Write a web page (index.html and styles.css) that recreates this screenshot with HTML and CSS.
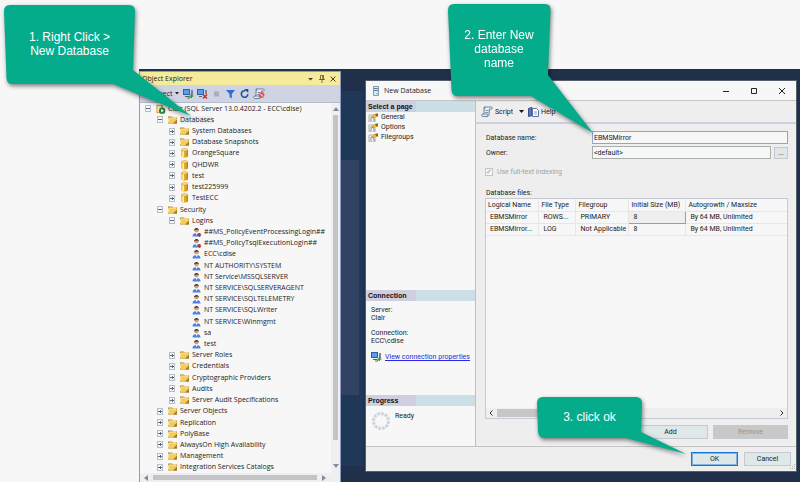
FILE: index.html
```html
<!DOCTYPE html>
<html lang="en">
<head>
<meta charset="utf-8">
<title>New Database</title>
<link rel="stylesheet" href="styles.css">
</head>
<body>
<svg class="sprite" aria-hidden="true">
  <symbol id="folder" viewBox="0 0 10 9"><path d="M0 1h4l1 1h4v6H0z" fill="#b98a2c"/><path d="M0 3l1-1h7v5H0z" fill="#fbe9a0"/><path d="M1 3h8v4.500H1z" fill="#f3cc5c"/><path d="M5 8L9 4v4z" fill="#a87a1e"/></symbol>
  <symbol id="cyl" viewBox="0 0 10 11"><path d="M1 2v7c0 2 7 2 7 0V2z" fill="#e2a51c"/><path d="M2 2v7.800l2 .4V2z" fill="#fff0a0"/><path d="M7 2h1v7l-1 .8z" fill="#a87410"/><ellipse cx="4.500" cy="2" rx="3.500" ry="1.400" fill="#fbe08a" stroke="#b9861c" stroke-width=".5"/></symbol>
  <symbol id="server" viewBox="0 0 10 11"><path d="M0 1h7v9H0z" fill="#c79a3c"/><path d="M1 2h4v7H1z" fill="#fbe9a0"/><circle cx="6.300" cy="7.300" r="3.500" fill="#2c7a32"/><path d="M5.200 5.300v4l3-2z" fill="#fff"/></symbol>
  <symbol id="user" viewBox="0 0 10 10"><path d="M.5 9.500C.5 6.500 3 6 4.500 6s4 .5 4 3.500z" fill="#4b86dc"/><path d="M3.300 5.500h2.600L4.600 8z" fill="#fff"/><circle cx="4.500" cy="3.500" r="2.100" fill="#d79b76"/><path d="M2.100 3.500C2 0 7 0 6.900 3.500 6 2 4 2 2.100 3.500z" fill="#3c2a22"/></symbol>
  <symbol id="userx" viewBox="0 0 10 10"><use href="#user"/><path d="M6.500 6h2v1.800h1.200L7.500 10 5.400 7.800h1.100z" fill="#c22a35"/></symbol>
  <symbol id="plug" viewBox="0 0 11 10"><path d="M0 0h7v6H0z" fill="#3b5c9c"/><path d="M1 1h5v4H1z" fill="#4fa0f0"/><path d="M2 7h4v1H2z" fill="#566"/><path d="M8 1h2v5H8z" fill="#7784a0"/><path d="M4 9h3V7h3" fill="none" stroke="#2e9b38"/><path d="M8.500 4v5M6.500 7h4" stroke="#2e9b38"/></symbol>
  <symbol id="unplug" viewBox="0 0 11 10"><path d="M0 0h7v6H0z" fill="#3b5c9c"/><path d="M1 1h5v4H1z" fill="#4fa0f0"/><path d="M2 7h3v1H2z" fill="#566"/><path d="M8 1h2v4H8z" fill="#7784a0"/><path d="M6 5.500l4 4M10 5.500l-4 4" stroke="#d02b2b" stroke-width="1.500"/></symbol>
  <symbol id="scroll" viewBox="0 0 12 11"><path d="M3 1h7c2 0 1.500 2 .5 2H8.500L8 8c0 2-1 2.500-2 2.500H1.500C0 10 .5 8 1.500 8H3z" fill="#e7eef8" stroke="#5f7898" stroke-width=".9"/><path d="M3 1c1.500.5 1 2 .5 2.500M4.500 4.500h3M4.200 6.500h3M2 8h4.500c-.5 1 0 2 0 2.500" fill="none" stroke="#5f7898" stroke-width=".8"/></symbol>
  <symbol id="page" viewBox="0 0 11 9"><path d="M1 2h6v7H1z" fill="#f4f4f4" stroke="#999" stroke-width=".8"/><path d="M2 5h2M2 7h2M5 7h2" stroke="#888"/><path d="M3.500 3.500L6 1l4-.5v3L8 4 6 5.500z" fill="#e8b93c"/><path d="M7 1l3-.5v2.800L8.500 3.500z" fill="#7a6330"/><path d="M3.500 3.500L6 5.500" stroke="#555" stroke-width=".8"/></symbol>
</svg>

<main class="desktop">
  <section class="explorer" aria-label="Object Explorer">
    <header class="explorer-title">
      <h1>Object Explorer</h1>
      <button aria-label="Window position"><svg width="6" height="6"><path d="M0 2h5L2.500 4.500z" fill="#4b4530"/></svg></button>
      <button aria-label="Auto hide"><svg width="6" height="8"><path d="M1.500.5h3v4h-3zM0 4.500h6M3 4.500V8M3.700 1v3" fill="none" stroke="#6b6233" stroke-width=".9"/></svg></button>
      <button aria-label="Close panel"><svg width="6" height="6"><path d="M.5.500l5 5M5.500.500l-5 5" stroke="#4b4530"/></svg></button>
    </header>
    <div class="explorer-tools">
      <button class="connect">Connect<svg width="5" height="4"><path d="M0 0h4L2 2.500z" fill="#222"/></svg></button>
      <button aria-label="Connect"><svg width="11" height="10"><use href="#plug"/></svg></button>
      <button aria-label="Disconnect"><svg width="11" height="10"><use href="#unplug"/></svg></button>
      <button aria-label="Stop"><svg width="11" height="10"><path d="M3 2.500h5v5H3z" fill="#a9aebb"/></svg></button>
      <button aria-label="Filter"><svg width="11" height="10"><path d="M1 1h9L6.800 5v4.500L4.500 8V5z" fill="#2c6fd0"/></svg></button>
      <button aria-label="Refresh"><svg width="11" height="10"><path d="M6.500 1.800a3.300 3.300 0 1 0 2.400 3.500" fill="none" stroke="#174f92" stroke-width="1.500"/><path d="M5.300 0h4v4z" fill="#174f92"/></svg></button>
      <button aria-label="Activity"><svg width="12" height="11"><use href="#scroll"/><circle cx="8.500" cy="7" r="2.900" fill="#dd5a5a"/><path d="M7 5.500l3 3" stroke="#fff"/></svg></button>
    </div>
    <div class="explorer-body">
      <ul class="tree">
        <li><button class="tog open" aria-label="Collapse"></button><svg><use href="#server"/></svg><span>Clair (SQL Server 13.0.4202.2 - ECC\cdise)</span></li>
        <li class="l1"><button class="tog open" aria-label="Collapse"></button><svg><use href="#folder"/></svg><span class="current">Databases</span></li>
        <li class="l2"><button class="tog" aria-label="Expand"></button><svg><use href="#folder"/></svg><span>System Databases</span></li>
        <li class="l2"><button class="tog" aria-label="Expand"></button><svg><use href="#folder"/></svg><span>Database Snapshots</span></li>
        <li class="l2"><button class="tog" aria-label="Expand"></button><svg><use href="#cyl"/></svg><span>OrangeSquare</span></li>
        <li class="l2"><button class="tog" aria-label="Expand"></button><svg><use href="#cyl"/></svg><span>QHDWR</span></li>
        <li class="l2"><button class="tog" aria-label="Expand"></button><svg><use href="#cyl"/></svg><span>test</span></li>
        <li class="l2"><button class="tog" aria-label="Expand"></button><svg><use href="#cyl"/></svg><span>test225999</span></li>
        <li class="l2"><button class="tog" aria-label="Expand"></button><svg><use href="#cyl"/></svg><span>TestECC</span></li>
        <li class="l1"><button class="tog open" aria-label="Collapse"></button><svg><use href="#folder"/></svg><span>Security</span></li>
        <li class="l2"><button class="tog open" aria-label="Collapse"></button><svg><use href="#folder"/></svg><span>Logins</span></li>
        <li class="l3"><svg><use href="#userx"/></svg><span>##MS_PolicyEventProcessingLogin##</span></li>
        <li class="l3"><svg><use href="#userx"/></svg><span>##MS_PolicyTsqlExecutionLogin##</span></li>
        <li class="l3"><svg><use href="#user"/></svg><span>ECC\cdise</span></li>
        <li class="l3"><svg><use href="#user"/></svg><span>NT AUTHORITY\SYSTEM</span></li>
        <li class="l3"><svg><use href="#user"/></svg><span>NT Service\MSSQLSERVER</span></li>
        <li class="l3"><svg><use href="#user"/></svg><span>NT SERVICE\SQLSERVERAGENT</span></li>
        <li class="l3"><svg><use href="#user"/></svg><span>NT SERVICE\SQLTELEMETRY</span></li>
        <li class="l3"><svg><use href="#user"/></svg><span>NT SERVICE\SQLWriter</span></li>
        <li class="l3"><svg><use href="#user"/></svg><span>NT SERVICE\Winmgmt</span></li>
        <li class="l3"><svg><use href="#user"/></svg><span>sa</span></li>
        <li class="l3"><svg><use href="#user"/></svg><span>test</span></li>
        <li class="l2"><button class="tog" aria-label="Expand"></button><svg><use href="#folder"/></svg><span>Server Roles</span></li>
        <li class="l2"><button class="tog" aria-label="Expand"></button><svg><use href="#folder"/></svg><span>Credentials</span></li>
        <li class="l2"><button class="tog" aria-label="Expand"></button><svg><use href="#folder"/></svg><span>Cryptographic Providers</span></li>
        <li class="l2"><button class="tog" aria-label="Expand"></button><svg><use href="#folder"/></svg><span>Audits</span></li>
        <li class="l2"><button class="tog" aria-label="Expand"></button><svg><use href="#folder"/></svg><span>Server Audit Specifications</span></li>
        <li class="l1"><button class="tog" aria-label="Expand"></button><svg><use href="#folder"/></svg><span>Server Objects</span></li>
        <li class="l1"><button class="tog" aria-label="Expand"></button><svg><use href="#folder"/></svg><span>Replication</span></li>
        <li class="l1"><button class="tog" aria-label="Expand"></button><svg><use href="#folder"/></svg><span>PolyBase</span></li>
        <li class="l1"><button class="tog" aria-label="Expand"></button><svg><use href="#folder"/></svg><span>AlwaysOn High Availability</span></li>
        <li class="l1"><button class="tog" aria-label="Expand"></button><svg><use href="#folder"/></svg><span>Management</span></li>
        <li class="l1"><button class="tog" aria-label="Expand"></button><svg><use href="#folder"/></svg><span>Integration Services Catalogs</span></li>
      </ul>
      <div class="vbar"><svg width="6" height="4"><path d="M0 4h6L3 0z" fill="#868999"/></svg><i></i><b></b><svg width="6" height="4"><path d="M0 0h6L3 4z" fill="#868999"/></svg></div>
    </div>
    <div class="hbar"><svg width="4" height="6"><path d="M4 0v6L0 3z" fill="#868999"/></svg><i></i><svg width="4" height="6"><path d="M0 0v6l4-3z" fill="#868999"/></svg></div>
  </section>

  <section class="dialog" aria-label="New Database">
    <header class="dialog-title">
      <svg width="8" height="11"><path d="M1.500 1.500h5v9h-5z" fill="#dce9f2" stroke="#7f9cb2"/><path d="M2 3.500h4M2 5.500h4" stroke="#5c7e98"/><path d="M4.500 8.500h1" stroke="#3b9b48"/></svg>
      <h2>New Database</h2>
      <button aria-label="Minimize"><svg width="8" height="8"><path d="M1 4.500h6" stroke="#222"/></svg></button>
      <button aria-label="Maximize"><svg width="8" height="8"><path d="M1.500 1.500h5v5h-5z" fill="none" stroke="#222"/></svg></button>
      <button aria-label="Close"><svg width="8" height="8"><path d="M1 1l6 6M7 1L1 7" stroke="#222"/></svg></button>
    </header>
    <div class="dialog-body">
      <aside class="side">
        <h3>Select a page</h3>
        <nav class="pages">
          <a href="#general"><svg width="11" height="9"><use href="#page"/></svg>General</a>
          <a href="#options"><svg width="11" height="9"><use href="#page"/></svg>Options</a>
          <a href="#filegroups"><svg width="11" height="9"><use href="#page"/></svg>Filegroups</a>
        </nav>
        <h3>Connection</h3>
        <div class="conn">
          <p>Server:<br>Clair</p>
          <p>Connection:<br>ECC\cdise</p>
          <a href="#connection"><svg width="11" height="10"><use href="#plug"/></svg><span>View connection properties</span></a>
        </div>
        <h3>Progress</h3>
        <div class="progress"><svg width="18" height="18"><circle cx="9" cy="9" r="7.500" fill="none" stroke="#cfd3da" stroke-width="3" stroke-dasharray="2.900 1"/></svg><span>Ready</span></div>
      </aside>
      <div class="content">
        <div class="tools">
          <button><svg width="12" height="11"><use href="#scroll"/></svg>Script<svg class="caret" width="5" height="4"><path d="M0 0h5L2.500 3z" fill="#111"/></svg></button>
          <button><svg width="11" height="10"><path d="M.5 1.500L4 .5v8l-3.500 1z" fill="#5b78b8" stroke="#34508c"/><path d="M4.500 1.500h4l2 2v6h-6z" fill="#fff" stroke="#5d7299"/><path d="M6 5h3M6 7h3" stroke="#8ba0c4"/></svg>Help</button>
        </div>
        <form id="general">
          <div class="field"><label for="dbname">Database name:</label><input id="dbname" class="active" type="text" value="EBMSMirror" autofocus></div>
          <div class="field"><label for="owner">Owner:</label><input id="owner" type="text" value="&lt;default&gt;"><button type="button" class="more" aria-label="Browse owners">...</button></div>
          <label class="check"><input type="checkbox" checked disabled>Use full-text indexing</label>
          <p class="files-label" id="files">Database files:</p>
          <div class="files">
            <table aria-labelledby="files">
              <colgroup><col class="c1"><col class="c2"><col class="c3"><col class="c4"><col></colgroup>
              <thead><tr><th>Logical Name</th><th>File Type</th><th>Filegroup</th><th>Initial Size (MB)</th><th>Autogrowth / Maxsize</th></tr></thead>
              <tbody>
                <tr><td>EBMSMirror</td><td>ROWS...</td><td>PRIMARY</td><td class="cell">8</td><td>By 64 MB, Unlimited</td></tr>
                <tr><td>EBMSMirror...</td><td>LOG</td><td>Not Applicable</td><td>8</td><td>By 64 MB, Unlimited</td></tr>
              </tbody>
            </table>
            <div class="gridbar"><svg width="4" height="6"><path d="M3.500.500L1 3l2.500 2.500" fill="none" stroke="#333"/></svg><i></i><svg width="4" height="6"><path d="M.5.500L3 3 .5 5.500" fill="none" stroke="#333"/></svg></div>
          </div>
          <div class="row-actions"><button type="button">Add</button><button type="button" disabled>Remove</button></div>
        </form>
      </div>
    </div>
    <footer class="dialog-actions"><button class="primary">OK</button><button>Cancel</button>
      <svg class="grip" width="6" height="6"><path d="M4 0h1v1H4zM4 2h1v1H4zM2 2h1v1H2zM4 4h1v1H4zM2 4h1v1H2zM0 4h1v1H0z" fill="#b5b5b5"/></svg></footer>
  </section>
</main>

<div class="callout one">
  <svg width="190" height="116"><path d="M6 0H125Q131 0 131 6L129 65 187 111 109 79H8Q3 79 2.500 73L0 6Q0 0 6 0z"/></svg>
  <p>1. Right Click &gt;<br>New Database</p>
</div>
<div class="callout two">
  <svg width="150" height="132"><path d="M6 0H97Q103 0 102.500 6L100 71 145 129 83 92H9Q4 92 3.500 86L0 6Q0 0 6 0z"/></svg>
  <p>2. Enter New<br>database<br>name</p>
</div>
<div class="callout three">
  <svg width="152" height="60"><path d="M6 0H99Q105 0 105 6L104 35 149 57 89 41H7Q2 41 1 35L0 6Q0 0 6 0z"/></svg>
  <p>3. click ok</p>
</div>
</body>
</html>
```
FILE: styles.css
```css
* { box-sizing: border-box; }
body {
  margin: 0;
  min-height: 100vh;
  display: flex;
  position: relative;
  background: #f7f7f7;
  color: #222;
  font: 7px/8px Roboto, "Liberation Sans", sans-serif;
  overflow: hidden;
}
h1, h2, h3, p, ul { margin: 0; padding: 0; font-size: inherit; font-weight: normal; }
button { font: inherit; color: inherit; border: 0; padding: 0; background: none; display: flex; align-items: center; justify-content: center; }
input { font: inherit; color: inherit; margin: 0; }
a { color: inherit; text-decoration: none; }
svg { display: block; flex: none; }
.sprite { position: absolute; width: 0; height: 0; }

.desktop {
  flex: 1;
  display: flex;
  margin: 69px 0 0 139px;
  padding-top: 2px;
  background:
    linear-gradient(#314263, #314263) 202px 91px / 18px 235px no-repeat,
    linear-gradient(#203858, #203858) 202px 22px / 22px 375px no-repeat,
    #20304b;
}

.explorer {
  flex: 0 0 202px;
  display: flex;
  flex-direction: column;
  border: 1px solid #8e9bbc;
  border-bottom: 0;
  background: #f7f7f7;
  font-family: "Open Sans", "Noto Sans", sans-serif;
}
.explorer-title { display: flex; align-items: center; gap: 5px; height: 13px; padding: 0 4px 0 2px; background: #f5eb9b; }
.explorer-title h1 { flex: 1; }
.explorer-tools { display: flex; align-items: center; gap: 3px; height: 18px; padding-left: 5px; background: #d0d3e1; border-bottom: 1px solid #b4bdcf; }
.connect { gap: 2px; width: 35px; }
.explorer-body { flex: 1; display: flex; min-height: 0; }
.tree { flex: 1; min-width: 0; list-style: none; display: grid; grid-auto-rows: 1fr; padding-left: 5px; }
.tree li { display: flex; align-items: center; white-space: nowrap; min-height: 0; }
.tree svg { width: 10px; height: 10px; margin: 0 2px 0 5px; }
.tree .l1 { padding-left: 12px; }
.tree .l2 { padding-left: 24px; }
.tree .l3 { padding-left: 47px; }
.tree .l3 svg { margin-left: 0; }
.current { background: #eee; }
.tog {
  flex: none;
  width: 6px;
  height: 7px;
  border: 1px solid #b8bcc4;
  background:
    linear-gradient(#5c6a8c, #5c6a8c) 0 2px / 4px 1px no-repeat,
    linear-gradient(#5c6a8c, #5c6a8c) 2px 1px / 1px 3px no-repeat;
}
.open { background-size: 4px 1px, 0 0; }
.vbar { width: 9px; display: flex; flex-direction: column; align-items: center; gap: 4px; padding: 4px 0 5px; background: #efeff1; }
.vbar i { flex: 1; width: 5px; background: #c4c4c6; }
.vbar b { height: 16px; }
.hbar { display: flex; align-items: center; gap: 5px; height: 9px; padding: 0 14px 0 4px; background: #efeff1; }
.hbar i { flex: 1; height: 5px; background: #c4c4c6; }

.dialog {
  flex: 1;
  display: flex;
  flex-direction: column;
  margin: 9px 3px 10px 24px;
  border: 1px solid #55606c;
  background: #eee;
}
.dialog-title { display: flex; align-items: center; height: 20px; padding: 0 10px 0 6px; background: #f7f7f7; border-bottom: 1px solid #c8c8ca; }
.dialog-title h2 { flex: 1; padding-left: 4px; font-family: "Open Sans", sans-serif; }
.dialog-title button { width: 28px; justify-content: flex-end; }
.dialog-body { flex: 1; display: flex; min-height: 0; border-bottom: 1px solid #c4c4c6; }
.side { flex: 0 0 109px; display: flex; flex-direction: column; background: #f7f7f7; border-right: 1px solid #c0c0c4; }
.side h3 { height: 11px; padding-left: 2px; font-family: "Liberation Sans", Arial, sans-serif; font-weight: bold; line-height: 11px; color: #111; background: linear-gradient(90deg, #cfcfdf 50px, #ccdee6 50px); }
.pages { flex: 1; }
.pages a { display: flex; align-items: center; gap: 2px; height: 10px; padding-left: 2px; }
.conn { height: 94px; padding: 5px; }
.conn p { margin-bottom: 7px; }
.conn a { display: flex; align-items: center; gap: 3px; color: #2929e0; white-space: nowrap; }
.conn a span { text-decoration: underline; }
.progress { display: flex; gap: 5px; height: 40px; padding: 6px; }

.content { flex: 1; display: flex; flex-direction: column; min-width: 0; }
.tools { display: flex; align-items: center; gap: 4px; height: 23px; padding-left: 5px; border-bottom: 2px solid #d0d0e0; }
.tools button { gap: 2px; }
.tools .caret { margin-left: 4px; }
form { flex: 1; display: flex; flex-direction: column; padding: 7px 8px 7px 9px; }
.field { display: flex; align-items: center; gap: 3px; margin-bottom: 2px; }
.field label { flex: 0 0 104px; padding-left: 1px; }
.field input { flex: 1; min-width: 0; height: 13px; padding: 0 1px; border: 1px solid #a9b0a9; background: #f7f7f7; outline: 0; }
.field .active { border-color: #8fa3d6; }
.more { width: 14px; height: 12px; border: 1px solid #c2c8d0; background: #dde8ea; }
.check { display: flex; align-items: center; gap: 4px; margin-top: 7px; color: #a2a2a2; }
.check input { appearance: none; width: 8px; height: 8px; border: 1px solid #c6c6c6; background: #f4f4f4; }
.check input::before { content: "✓"; display: block; font: 7px/6px "DejaVu Sans", sans-serif; color: #999; }
.files-label { margin: 13px 0 1px 1px; }
.files { flex: 1; display: flex; flex-direction: column; border: 1px solid #c5cad4; background: #f7f7f7; }
table { width: 100%; border-collapse: collapse; table-layout: fixed; }
th, td { height: 12px; padding: 0 0 0 4px; text-align: left; font-weight: normal; white-space: nowrap; border: 1px solid #e6e6e6; }
th { padding-left: 2px; }
tr > :first-child { border-left: 0; }
tr > :last-child { border-right: 0; }
thead th { border-top: 0; }
td.cell { border: 1px solid #94a394; background: #eee; }
.c1 { width: 53px; }
.c2 { width: 37px; }
.c3 { width: 53px; }
.c4 { width: 57px; }
.gridbar { display: flex; align-items: center; gap: 4px; height: 10px; margin-top: auto; padding: 0 3px; background: #eee; }
.gridbar i { flex: 1; margin-right: 140px; height: 8px; background: #c6c6c6; }
.row-actions { display: flex; justify-content: flex-end; gap: 5px; margin-top: 6px; }
.row-actions button { width: 75px; height: 14px; border: 1px solid #c6c8d2; background: #dfe8e8; }
.row-actions button:disabled { color: #949494; background: #c8c8c8; }
.dialog-actions { position: relative; display: flex; justify-content: flex-end; align-items: center; gap: 6px; height: 24px; padding-right: 5px; }
.dialog-actions button { width: 47px; height: 14px; border: 1px solid #c6c8d2; background: #dfe8e8; }
.dialog-actions .primary { border: 1px solid #1478d4; outline: 1px solid #7db4e4; outline-offset: -2px; }
.grip { position: absolute; right: 0; bottom: 1px; }

.callout { position: absolute; color: #fff; font: 12px/14px "Liberation Sans", Arial, sans-serif; text-align: center; }
.callout svg { position: absolute; top: 0; left: 0; overflow: visible; fill: #04ac8c; filter: drop-shadow(1px 2px 2px rgb(0 0 0 / 50%)); }
.callout p { position: relative; }
.one { left: 4px; top: 5px; width: 131px; padding-top: 25px; }
.two { left: 448px; top: 4px; width: 102px; padding-top: 24px; }
.three { left: 537px; top: 397px; width: 105px; padding-top: 13px; }
```
